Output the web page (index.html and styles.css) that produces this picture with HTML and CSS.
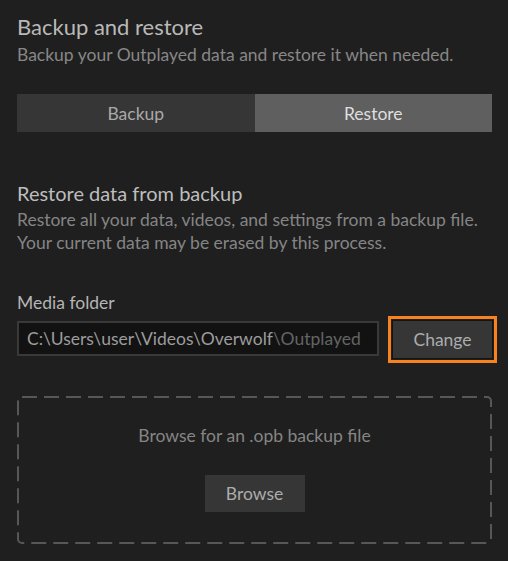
FILE: index.html
```html
<!DOCTYPE html>
<html>
<head>
<meta charset="utf-8">
<link rel="stylesheet" href="styles.css">
</head>
<body>
<div class="page">
  <h1 class="title">Backup and restore</h1>
  <p class="subtitle">Backup your Outplayed data and restore it when needed.</p>
  <div class="tabs">
    <div class="tab">Backup</div>
    <div class="tab active">Restore</div>
  </div>
  <h2 class="heading">Restore data from backup</h2>
  <p class="desc">Restore all your data, videos, and settings from a backup file.<br>Your current data may be erased by this process.</p>
  <div class="label">Media folder</div>
  <div class="folder-row">
    <div class="path">C:\Users\user\Videos\Overwolf<span class="dim">\Outplayed</span></div>
    <button class="btn change">Change</button>
  </div>
  <div class="drop">
    <div class="drop-text">Browse for an .opb backup file</div>
    <button class="btn browse">Browse</button>
  </div>
</div>
</body>
</html>
```
FILE: styles.css
```css
* { box-sizing: border-box; }
html, body { margin: 0; padding: 0; }
body {
  background: #1f1f1f;
  font-family: Lato, "Open Sans", sans-serif;
  width: 508px;
  height: 561px;
  overflow: hidden;
}
.page {
  padding: 13px 16px 0 17px;
}
.title {
  margin: 0;
  font-size: 22px;
  font-weight: 400;
  color: #b9b9b9;
  line-height: 28px;
}
.subtitle {
  margin: 2px 0 0;
  font-size: 17.5px;
  color: #878787;
  line-height: 24px;
}
.tabs {
  display: flex;
  margin-top: 27px;
  height: 38px;
  width: 475px;
}
.tab {
  flex: 1;
  display: flex;
  align-items: center;
  justify-content: center;
  background: #363636;
  color: #a9a9a9;
  font-size: 17.5px;
}
.tab.active {
  background: #5f5f5f;
  color: #dedede;
}
.heading {
  margin: 48px 0 0;
  font-size: 20px;
  font-weight: 400;
  color: #bdbdbd;
  line-height: 26px;
}
.desc {
  margin: 3px 0 0;
  font-size: 17.5px;
  line-height: 22.5px;
  color: #858585;
}
.label {
  margin-top: 38px;
  font-size: 17.5px;
  line-height: 22px;
  color: #b5b5b5;
}
.folder-row {
  display: flex;
  align-items: flex-start;
  margin-top: 7px;
}
.path {
  width: 362px;
  height: 35px;
  border: 2px solid #393939;
  background: #121212;
  color: #9c9c9c;
  font-size: 17.5px;
  line-height: 31px;
  padding-left: 8px;
  white-space: nowrap;
  overflow: hidden;
}
.dim { color: #646464; }
.btn {
  font-family: inherit;
  border: none;
  background: #363636;
  color: #acacac;
  font-size: 17.5px;
  cursor: pointer;
  padding: 0;
}
.change {
  width: 99px;
  height: 37px;
  margin-left: 14px;
  outline: 3px solid #f7821f;
  outline-offset: 2px;
  box-shadow: 0 0 0 1px #141414;
}
.drop {
  margin-top: 38px;
  width: 475px;
  height: 148px;
  background-image: url("data:image/svg+xml,%3Csvg xmlns='http://www.w3.org/2000/svg' width='475' height='148'%3E%3Crect x='1' y='1' width='473' height='146' rx='4' ry='4' fill='none' stroke='%23575757' stroke-width='2' stroke-dasharray='15 7'/%3E%3C/svg%3E");
  display: flex;
  flex-direction: column;
  align-items: center;
}
.drop-text {
  margin-top: 29px;
  font-size: 17.5px;
  line-height: 22px;
  color: #858585;
}
.browse {
  margin-top: 28px;
  width: 100px;
  height: 37px;
}
```
